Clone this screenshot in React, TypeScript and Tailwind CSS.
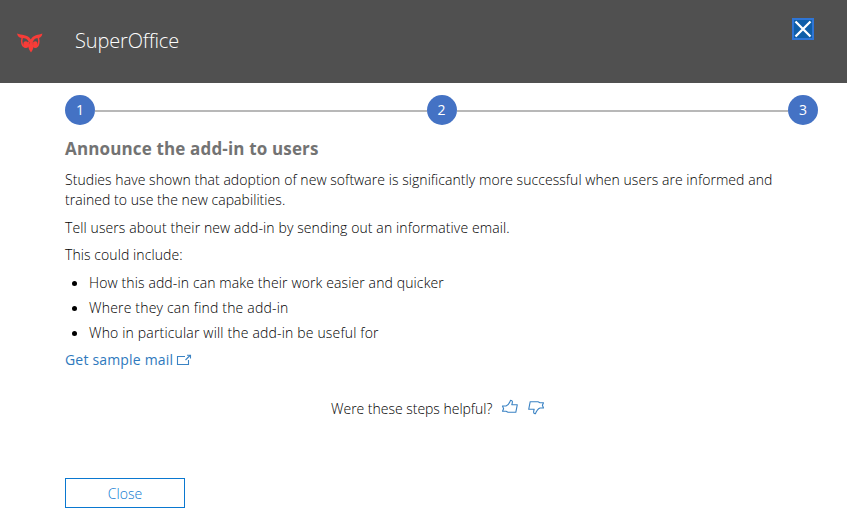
import React from "react";

const steps = [1, 2, 3];

const bullets = [
  { text: "How this add-in can make their work easier and quicker", tracking: "tracking-[0.12px]" },
  { text: "Where they can find the add-in", tracking: "tracking-[0.19px]" },
  { text: "Who in particular will the add-in be useful for", tracking: "tracking-[0.17px]" },
];

function OwlLogo() {
  return (
    <svg width="26" height="20" viewBox="0 0 26 20" fill="#f73c38">
      <path d="M0 0.4 C4 2.4 11 0.8 13.8 6.6 C16 1.4 21.5 2 25.4 0.4 C25 3.4 23.4 4.8 21.4 5 C18.6 5 17 6 16 8.5 L14 10.5 L11.6 8.5 C10.4 6 8.4 5 5.2 5 C2.6 4.8 0.6 3.6 0 0.4 Z" />
      <path d="M5.2 4.6 C4 8.8 4.8 13.6 8.6 14.2 C11.2 14.4 12.4 12 11.6 8.6" fill="none" stroke="#f73c38" strokeWidth="1.5" />
      <path d="M21.3 4.6 C22.5 8.8 21.8 13.6 18.6 14.2 C16.4 14.4 15.4 12 16 8.6" fill="none" stroke="#f73c38" strokeWidth="1.5" />
      <ellipse cx="8.8" cy="11.4" rx="2.5" ry="3.1" />
      <ellipse cx="18.4" cy="11.4" rx="2.2" ry="3.1" />
      <path d="M13.9 8.6 L16.6 13 C16.4 15.6 15.4 17.6 14 19.4 C12.6 17.6 11.4 15.6 11.2 13 Z" />
    </svg>
  );
}

function Thumb({ down = false }: { down?: boolean }) {
  return (
    <svg
      width="18"
      height="16"
      viewBox="0 0 18 16"
      fill="none"
      stroke="#3b83c4"
      strokeWidth="1.1"
      strokeLinejoin="round"
      className={down ? "rotate-180" : ""}
    >
      <path d="M1.5 7 H5 C7.5 6 8.6 4 9.6 1.2 C11.6 1.3 11.8 3 10.8 5.7 H16.3 L14.8 13.3 H7 L5 12.3 H1.5 L2.6 9.7 Z" />
    </svg>
  );
}

export default function App() {
  return (
    <div className="flex h-[515px] w-[847px] flex-col overflow-hidden bg-white font-['Open_Sans',sans-serif] text-sm font-light text-black">
      <header className="flex h-[83px] shrink-0 items-start bg-[#505050]">
        <div className="mt-[33px] ml-[17px] w-[58px]">
          <OwlLogo />
        </div>
        <h1 className="mt-[26px] flex-1 text-[20px] leading-[30px] tracking-[-0.15px] text-white">SuperOffice</h1>
        <button className="mt-[18px] mr-[33px] flex h-[22px] w-[22px] items-center justify-center border-2 border-[#2e75d6] bg-[#0f5ea8]">
          <svg width="18" height="18" viewBox="0 0 18 18" stroke="white" strokeWidth="2.3">
            <path d="M1.5 1.5 L16.5 16.5 M16.5 1.5 L1.5 16.5" />
          </svg>
        </button>
      </header>
      <main className="ml-[65px] flex w-[753px] flex-col items-start">
        <div className="mt-3 flex h-[30px] w-full items-center">
          {steps.map((n) => (
            <React.Fragment key={n}>
              {n > 1 && <div className="mt-[2px] h-[2px] flex-1 bg-[#b8b8b8]" />}
              <div className="flex size-[30px] items-center justify-center rounded-full bg-[#4472c4] text-[14px] font-normal text-white">{n}</div>
            </React.Fragment>
          ))}
        </div>
        <h2 className="mt-[12px] text-[17px] leading-6 font-bold tracking-[0.15px] text-[#737373]">Announce the add-in to users</h2>
        <p className="mt-[9px] leading-5 tracking-[0.055px] whitespace-nowrap">
          Studies have shown that adoption of new software is significantly more successful when users are informed and
          <br />
          trained to use the new capabilities.
        </p>
        <p className="mt-2 leading-5 tracking-[0.105px]">Tell users about their new add-in by sending out an informative email.</p>
        <p className="mt-[7px] leading-5 tracking-[0.08px]">This could include:</p>
        <ul className="mt-[5px] w-full leading-[25px]">
          {bullets.map(({ text, tracking }) => (
            <li key={text} className="flex items-center">
              <i className="mt-[2px] mr-3 ml-[7px] size-[5px] rounded-full bg-black" />
              <span className={tracking}>{text}</span>
            </li>
          ))}
        </ul>
        <a className="mt-[5px] flex items-center leading-5 font-normal text-[#2e79bd]">
          <span className="tracking-[0.18px]">Get sample mail</span>
          <svg width="16" height="12" viewBox="0 0 16 12" className="ml-[3px]" fill="none" stroke="#3b83c4" strokeWidth="1.1">
            <path d="M9 2.5 H1.5 V10.5 H12.5 V6 M9.5 6 L14 1.5 M11 1.2 H14.5 V4.5" />
          </svg>
        </a>
        <div className="mt-[29px] ml-[266px] flex h-5 items-center leading-5">
          <span className="tracking-[-0.02px]">Were these steps helpful?</span>
          <div className="mb-[5px] ml-[9px] flex gap-2">
            <Thumb />
            <Thumb down />
          </div>
        </div>
        <button className="mt-[59px] h-[30px] w-[120px] border border-[#0a78d0] pt-px text-[#0a78d0]">Close</button>
      </main>
    </div>
  );
}
